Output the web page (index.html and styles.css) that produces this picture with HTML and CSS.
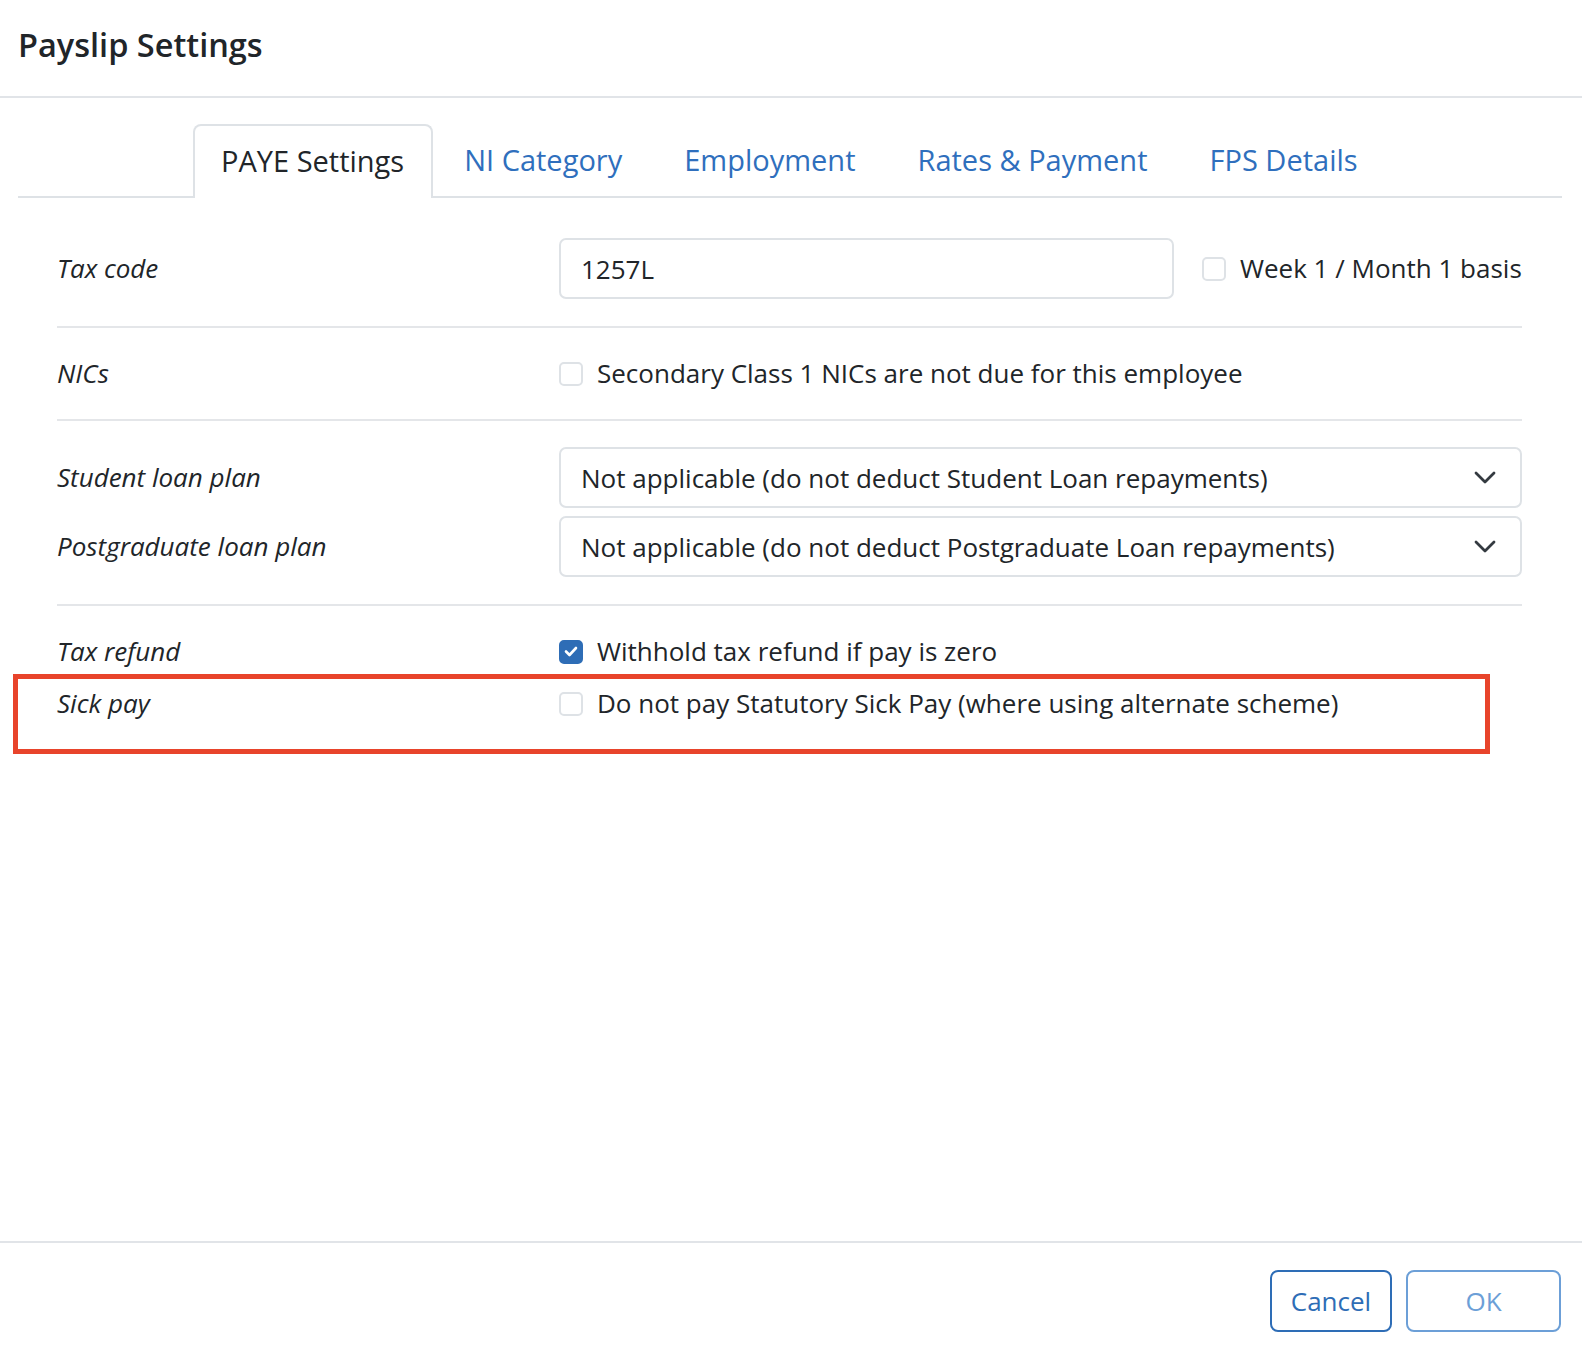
FILE: index.html
```html
<!DOCTYPE html>
<html lang="en">
<head>
    <meta charset="UTF-8">
    <meta name="viewport" content="width=device-width, initial-scale=1.0">
    <title>Payslip Settings</title>
    <link rel="stylesheet" href="styles.css">
</head>
<body>
    <div class="dialog">
        <div class="dialog-header">
            <h1>Payslip Settings</h1>
        </div>

        <div class="dialog-body">
            <ul class="tabs">
                <li class="tab active">PAYE Settings</li>
                <li class="tab">NI Category</li>
                <li class="tab">Employment</li>
                <li class="tab">Rates &amp; Payment</li>
                <li class="tab">FPS Details</li>
            </ul>

            <div class="tab-content">
                <div class="section section-first">
                    <div class="row">
                        <label class="label" for="taxcode">Tax code</label>
                        <div class="control control-inline">
                            <input type="text" id="taxcode" class="input" value="1257L">
                            <label class="check">
                                <span class="box"></span>
                                Week 1 / Month 1 basis
                            </label>
                        </div>
                    </div>
                </div>

                <div class="section">
                    <div class="row">
                        <div class="label">NICs</div>
                        <div class="control">
                            <label class="check">
                                <span class="box"></span>
                                Secondary Class 1 NICs are not due for this employee
                            </label>
                        </div>
                    </div>
                </div>

                <div class="section section-selects">
                    <div class="row">
                        <div class="label">Student loan plan</div>
                        <div class="control">
                            <div class="select">
                                <span>Not applicable (do not deduct Student Loan repayments)</span>
                                <svg class="chevron" width="22" height="13" viewBox="0 0 22 13"><path d="M2 2 L11 11 L20 2" fill="none" stroke="#343a40" stroke-width="2.8" stroke-linecap="round" stroke-linejoin="round"/></svg>
                            </div>
                        </div>
                    </div>
                    <div class="row">
                        <div class="label">Postgraduate loan plan</div>
                        <div class="control">
                            <div class="select">
                                <span>Not applicable (do not deduct Postgraduate Loan repayments)</span>
                                <svg class="chevron" width="22" height="13" viewBox="0 0 22 13"><path d="M2 2 L11 11 L20 2" fill="none" stroke="#343a40" stroke-width="2.8" stroke-linecap="round" stroke-linejoin="round"/></svg>
                            </div>
                        </div>
                    </div>
                </div>

                <div class="section section-last">
                    <div class="row">
                        <div class="label">Tax refund</div>
                        <div class="control">
                            <label class="check">
                                <span class="box checked">
                                    <svg width="14" height="11" viewBox="0 0 14 11"><path d="M2 5.5 L5.5 9 L12 2" fill="none" stroke="#fff" stroke-width="2.6" stroke-linecap="round" stroke-linejoin="round"/></svg>
                                </span>
                                Withhold tax refund if pay is zero
                            </label>
                        </div>
                    </div>
                    <div class="row highlight">
                        <div class="label">Sick pay</div>
                        <div class="control">
                            <label class="check">
                                <span class="box"></span>
                                Do not pay Statutory Sick Pay (where using alternate scheme)
                            </label>
                        </div>
                    </div>
                </div>
            </div>
        </div>

        <div class="dialog-footer">
            <button class="btn btn-cancel">Cancel</button>
            <button class="btn btn-disabled">OK</button>
        </div>
    </div>
</body>
</html>
```

FILE: styles.css
```css
*, *::before, *::after {
    box-sizing: border-box;
}
body {
    font-family: "Open Sans", "Noto Sans", sans-serif;
    margin: 0;
    padding: 0;
    background-color: #fff;
    color: #212529;
}
.dialog {
    height: 100vh;
    display: flex;
    flex-direction: column;
}
.dialog-header {
    height: 98px;
    padding: 0 18px;
    border-bottom: 2px solid #e1e4e8;
    display: flex;
    align-items: center;
}
.dialog-header h1 {
    margin: 0 0 8px 0;
    font-size: 32.5px;
    font-weight: 600;
    color: #212529;
}
.dialog-body {
    flex: 1;
    padding: 26px 20px 0 18px;
}
.tabs {
    list-style: none;
    margin: 0;
    padding: 0 0 0 175px;
    display: flex;
    border-bottom: 2px solid #dee2e6;
}
.tab {
    font-size: 29px;
    color: #2f6fbd;
    padding: 0 29px 3px;
    height: 72px;
    display: flex;
    align-items: center;
    border: 2px solid transparent;
    border-bottom: none;
    margin-bottom: -2px;
}
.tab.active {
    color: #212529;
    background: #fff;
    border-color: #dee2e6;
    border-radius: 8px 8px 0 0;
    height: 74px;
    padding: 0 27px 3px 26px;
}
.tab-content {
    padding: 12px 40px 0 39px;
}
.section {
    padding: 28px 0;
    border-bottom: 2px solid #e4e6e9;
    display: flex;
    flex-direction: column;
}
.section-first {
    padding-bottom: 27px;
}
.section-selects {
    padding: 26px 0 27px;
    gap: 8px;
}
.section-last {
    border-bottom: none;
    gap: 17px;
}
.row {
    display: flex;
    align-items: center;
    font-size: 26px;
}
.label {
    width: 502px;
    flex-shrink: 0;
    font-style: italic;
    line-height: 35px;
}
.control {
    flex: 1;
    display: flex;
    align-items: center;
}
.control-inline {
    gap: 28px;
}
.input {
    width: 615px;
    height: 61px;
    border: 2px solid #dee2e6;
    border-radius: 7px;
    padding: 0 20px;
    font-family: inherit;
    font-size: 26px;
    color: #212529;
}
.check {
    display: flex;
    align-items: center;
    gap: 14px;
    line-height: 35px;
    white-space: nowrap;
}
.box {
    width: 24px;
    height: 24px;
    border: 2px solid #dee2e6;
    border-radius: 5px;
    display: flex;
    align-items: center;
    justify-content: center;
    flex-shrink: 0;
}
.box.checked {
    background-color: #2e6db6;
    border-color: #2e6db6;
}
.select {
    width: 100%;
    height: 61px;
    border: 2px solid #dee2e6;
    border-radius: 7px;
    padding: 0 24px 0 20px;
    display: flex;
    align-items: center;
    justify-content: space-between;
}
.highlight {
    position: relative;
}
.highlight::after {
    content: "";
    position: absolute;
    top: -12px;
    left: -44px;
    width: 1477px;
    height: 80px;
    border: 5px solid #e8442b;
}
.dialog-footer {
    border-top: 2px solid #e1e4e8;
    padding: 27px 21px 22px 0;
    display: flex;
    justify-content: flex-end;
    gap: 14px;
}
.btn {
    font-family: inherit;
    font-size: 26px;
    height: 62px;
    padding: 0;
    background: #fff;
    color: #2e6db6;
    border: 2px solid #2e6db6;
    border-radius: 8px;
}
.btn-cancel {
    width: 122px;
}
.btn-disabled {
    width: 155px;
    color: #6c9fd7;
    border-color: #6c9fd7;
}
```
